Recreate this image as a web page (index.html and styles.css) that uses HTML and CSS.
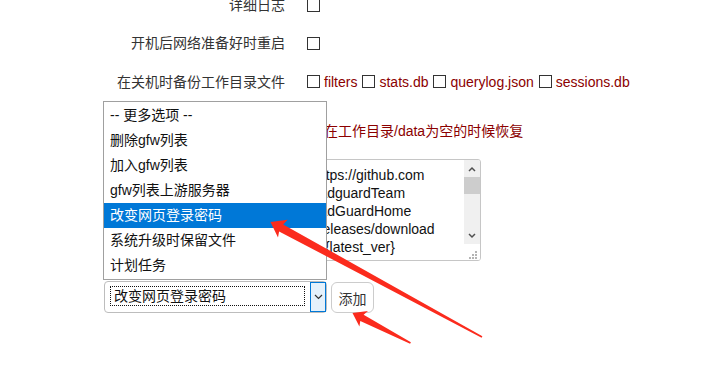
FILE: index.html
```html
<!DOCTYPE html>
<html lang="zh-CN">
<head>
<meta charset="utf-8">
<title>设置</title>
<link rel="stylesheet" href="styles.css">
</head>
<body>
<div class="page">
  <div class="row r1">
    <div class="label">详细日志</div>
    <div class="value"><span class="cb"></span></div>
  </div>
  <div class="row r2">
    <div class="label">开机后网络准备好时重启</div>
    <div class="value"><span class="cb"></span></div>
  </div>
  <div class="row r3">
    <div class="label">在关机时备份工作目录文件</div>
    <div class="value opts">
      <span class="opt"><span class="cb"></span><span class="red">filters</span></span>
      <span class="opt"><span class="cb"></span><span class="red">stats.db</span></span>
      <span class="opt"><span class="cb"></span><span class="red">querylog.json</span></span>
      <span class="opt"><span class="cb"></span><span class="red">sessions.db</span></span>
    </div>
  </div>
  <div class="row r4">
    <div class="label">恢复备份</div>
    <div class="value opt"><span class="cb"></span><span class="red">在工作目录/data为空的时候恢复</span></div>
  </div>
  <div class="row r5">
    <div class="label">下载地址</div>
    <div class="value">
      <div class="textarea">
        <div class="ta-text">https://github.com
/AdguardTeam
/AdGuardHome
/releases/download
/v{latest_ver}</div>
        <div class="ta-scroll">
          <div class="sb-btn"><svg width="8" height="6" viewBox="0 0 8 6"><polyline points="1,5 4,2 7,5" fill="none" stroke="#505050" stroke-width="1.5"/></svg></div>
          <div class="sb-thumb"></div>
          <div class="sb-track"></div>
          <div class="sb-btn"><svg width="8" height="6" viewBox="0 0 8 6"><polyline points="1,1 4,4 7,1" fill="none" stroke="#505050" stroke-width="1.5"/></svg></div>
          <div class="sb-corner"><svg width="16" height="16" viewBox="0 0 16 16"><g fill="#b4b4b4"><rect x="11" y="7" width="2" height="2"/><rect x="8" y="10" width="2" height="2"/><rect x="11" y="10" width="2" height="2"/><rect x="5" y="13" width="2" height="2"/><rect x="8" y="13" width="2" height="2"/><rect x="11" y="13" width="2" height="2"/></g></svg></div>
        </div>
      </div>
    </div>
  </div>
  <div class="actions">
    <div class="select">
      <div class="sel-text">改变网页登录密码</div>
      <div class="sel-btn"><svg width="9" height="6" viewBox="0 0 9 6"><polyline points="1,1 4.5,4.5 8,1" fill="none" stroke="#333" stroke-width="1.2"/></svg></div>
      <ul class="listbox">
        <li>-- 更多选项 --</li>
        <li>删除gfw列表</li>
        <li>加入gfw列表</li>
        <li>gfw列表上游服务器</li>
        <li class="sel">改变网页登录密码</li>
        <li>系统升级时保留文件</li>
        <li>计划任务</li>
      </ul>
    </div>
    <button class="btn">添加</button>
  </div>
</div>
<svg class="annot" width="722" height="369" viewBox="0 0 722 369">
  <polygon fill="#fb2b1d" points="270.5,222 287.6,219.8 283.2,224.4 482.4,336.3 481.6,337.7 279.1,231.4 278.0,237.5"/>
  <polygon fill="#fb2b1d" points="352.5,313 368.0,311.0 363.6,314.7 410.9,342.3 410.1,343.7 360.3,320.9 359.4,326.6"/>
</svg>
</body>
</html>
```

FILE: styles.css
```css
html, body {
  margin: 0;
  padding: 0;
  background: #fff;
  overflow: hidden;
}
body {
  width: 722px;
  height: 369px;
  font-family: "Liberation Sans", "Noto Sans CJK SC", sans-serif;
  font-size: 14px;
  color: #333;
}
.page {
  margin-top: -14px;
}
.row {
  display: flex;
  align-items: center;
  box-sizing: border-box;
}
.r1, .r2 { height: 38px; }
.r3 { height: 39px; }
.r4 {
  height: 58px;
  align-items: flex-start;
  padding-top: 21px;
}
.r5 {
  height: 102px;
  align-items: flex-start;
}
.label {
  width: 285px;
  flex: none;
  text-align: right;
  line-height: 18px;
  color: #333;
}
.value {
  margin-left: 22px;
  display: flex;
  align-items: center;
  line-height: 18px;
}
.cb {
  display: inline-block;
  width: 13px;
  height: 13px;
  box-sizing: border-box;
  border: 1px solid #333;
  background: #fff;
  flex: none;
}
.opts { gap: 5px; }
.opt {
  display: flex;
  align-items: center;
  gap: 4px;
}
.red { color: #8b0000; }
.textarea {
  margin-left: 4px;
  width: 170px;
  height: 102px;
  box-sizing: border-box;
  border: 1px solid #c6c6c6;
  border-radius: 3px;
  display: flex;
  overflow: hidden;
}
.ta-text {
  flex: 1;
  padding: 6px 0 0 2px;
  white-space: pre;
  overflow: hidden;
  line-height: 18px;
  color: #111;
}
.ta-scroll {
  width: 16px;
  display: flex;
  flex-direction: column;
  flex: none;
}
.sb-btn {
  height: 17px;
  background: #f0f0f0;
  display: flex;
  align-items: center;
  justify-content: center;
}
.sb-thumb {
  height: 17px;
  background: #cdcdcd;
}
.sb-track {
  flex: 1;
  background: #f0f0f0;
}
.sb-corner {
  height: 16px;
  background: #fff;
}
.sb-corner svg { display: block; }
.actions {
  display: flex;
  align-items: flex-end;
  margin-top: 20px;
  padding-left: 104px;
}
.select {
  position: relative;
  width: 223px;
  height: 32px;
  box-sizing: border-box;
  border: 1px solid #bdbdbd;
  border-radius: 4px;
  display: flex;
  align-items: flex-start;
}
.sel-text {
  margin: 4px 0 0 5px;
  width: 195px;
  height: 20px;
  box-sizing: border-box;
  border: 1px dotted #111;
  padding-left: 3px;
  line-height: 18px;
  color: #111;
}
.sel-btn {
  margin-left: auto;
  width: 16px;
  height: 30px;
  box-sizing: border-box;
  border: 1px solid #0078d7;
  background: #e5f1fb;
  display: flex;
  align-items: center;
  justify-content: center;
}
.listbox {
  position: absolute;
  left: -2px;
  bottom: calc(100% + 2px);
  width: 224px;
  margin: 0;
  padding: 1px 0;
  list-style: none;
  box-sizing: border-box;
  border: 1px solid #a0a0a0;
  background: #fff;
}
.listbox li {
  height: 25px;
  line-height: 25px;
  padding-left: 6px;
  color: #111;
  white-space: nowrap;
}
.listbox li.sel {
  background: #0078d7;
  color: #fff;
}
.btn {
  margin-left: 4px;
  width: 43px;
  height: 31px;
  box-sizing: border-box;
  border: 1px solid #cccccc;
  border-radius: 6px;
  background: #fff;
  font-family: inherit;
  font-size: 14px;
  color: #333;
  padding: 0;
}
.annot {
  position: absolute;
  left: 0;
  top: 0;
  pointer-events: none;
}
```
